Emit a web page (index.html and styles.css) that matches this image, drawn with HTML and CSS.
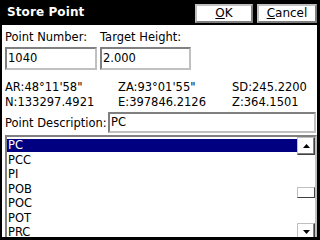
FILE: index.html
```html
<!DOCTYPE html>
<html>
<head>
<meta charset="utf-8">
<link rel="stylesheet" href="styles.css">
</head>
<body>
<div class="window">
  <div class="titlebar">
    <span class="title">Store Point</span>
    <div class="btns">
      <div class="btn ok"><u>O</u>K</div>
      <div class="btn cancel"><u>C</u>ancel</div>
    </div>
  </div>
  <div class="content">
    <div class="fields">
      <div class="field">
        <div class="label">Point Number:</div>
        <div class="edit">1040</div>
      </div>
      <div class="field">
        <div class="label">Target Height:</div>
        <div class="edit">2.000</div>
      </div>
    </div>
    <div class="info">
      <span>AR:48°11'58"</span><span>ZA:93°01'55"</span><span>SD:245.2200</span>
      <span>N:133297.4921</span><span>E:397846.2126</span><span>Z:364.1501</span>
    </div>
    <div class="desc">
      <span class="label desc-label">Point Description:</span>
      <div class="edit desc-edit">PC</div>
    </div>
    <div class="list">
      <ul class="items">
        <li class="sel">PC</li>
        <li>PCC</li>
        <li>PI</li>
        <li>POB</li>
        <li>POC</li>
        <li>POT</li>
        <li>PRC</li>
      </ul>
      <div class="scroll">
        <div class="sbtn"><svg width="7" height="4" viewBox="0 0 7 4"><polygon points="0,4 7,4 3.5,0" fill="#000"/></svg></div>
        <div class="track"><div class="thumb"></div></div>
        <div class="sbtn"><svg width="7" height="4" viewBox="0 0 7 4"><polygon points="0,0 7,0 3.5,4" fill="#000"/></svg></div>
      </div>
    </div>
  </div>
</div>
</body>
</html>
```

FILE: styles.css
```css
* { box-sizing: border-box; }
html, body { margin: 0; padding: 0; background: #fff; }
body { font-family: "DejaVu Sans", sans-serif; font-size: 11.5px; color: #000; }

.window {
  width: 320px;
  height: 240px;
  border-left: 2px solid #000;
  border-right: 3px solid #000;
  border-bottom: 3px solid #000;
  display: flex;
  flex-direction: column;
  overflow: hidden;
}

.titlebar {
  height: 25px;
  flex: none;
  background: #000;
  color: #fff;
  display: flex;
  align-items: flex-start;
  justify-content: space-between;
  padding-left: 5px;
}
.title {
  font-weight: bold;
  font-size: 12px;
  line-height: 25px;
  letter-spacing: 0.1px;
}
.btns {
  display: flex;
  gap: 4px;
  margin-top: 4px;
}
.btn {
  height: 19px;
  background: #fff;
  color: #000;
  border: 2px solid;
  border-color: #c0c0c0 #808080 #808080 #c0c0c0;
  line-height: 15px;
  text-align: center;
  font-size: 12px;
}
.btn u { text-decoration-thickness: 1px; text-underline-offset: 1px; }
.ok { width: 58px; }
.cancel { width: 60px; }

.content {
  flex: 1;
  display: flex;
  flex-direction: column;
  padding-left: 3px;
}

.fields {
  display: grid;
  grid-template-columns: 92px 91px;
  column-gap: 3px;
  margin-top: 5px;
}
.label { line-height: 14px; white-space: nowrap; }
.field .edit { margin-top: 3px; height: 23px; line-height: 18px; }

.edit {
  border: 2px solid;
  border-color: #808080 #c0c0c0 #c0c0c0 #808080;
  padding-left: 1px;
  background: #fff;
}

.info {
  display: grid;
  grid-template-columns: 113px 114px 1fr;
  margin-top: 10px;
  line-height: 15px;
}

.desc {
  display: flex;
  align-items: center;
  margin-top: 2px;
  margin-right: 1px;
}
.desc-label { width: 103px; flex: none; }
.desc-edit { flex: 1; height: 21px; line-height: 17px; }

.list {
  flex: 1;
  margin-top: 2px;
  display: flex;
  border-style: solid;
  border-width: 2px 2px 3px 2px;
  border-color: #808080 #c0c0c0 #c0c0c0 #808080;
  min-height: 0;
}
.items {
  list-style: none;
  margin: 0;
  padding: 2px 0 0 0;
  flex: 1;
  overflow: hidden;
}
.items li {
  height: 14.5px;
  line-height: 13px;
  padding-left: 1px;
}
.items li.sel { background: #000080; color: #fff; height: 13px; margin-bottom: 1.5px; }

.scroll {
  width: 18px;
  flex: none;
  display: flex;
  flex-direction: column;
}
.sbtn {
  height: 18px;
  flex: none;
  border: 1px solid;
  border-color: #c0c0c0 #404040 #404040 #c0c0c0;
  box-shadow: inset -1px -1px 0 #808080;
  display: flex;
  align-items: center;
  justify-content: center;
  background: #fff;
}
.track { flex: 1; }
.thumb {
  margin-top: 32px;
  height: 11px;
  border: 1px solid;
  border-color: #c0c0c0 #404040 #404040 #c0c0c0;
  background: #fff;
}
```
